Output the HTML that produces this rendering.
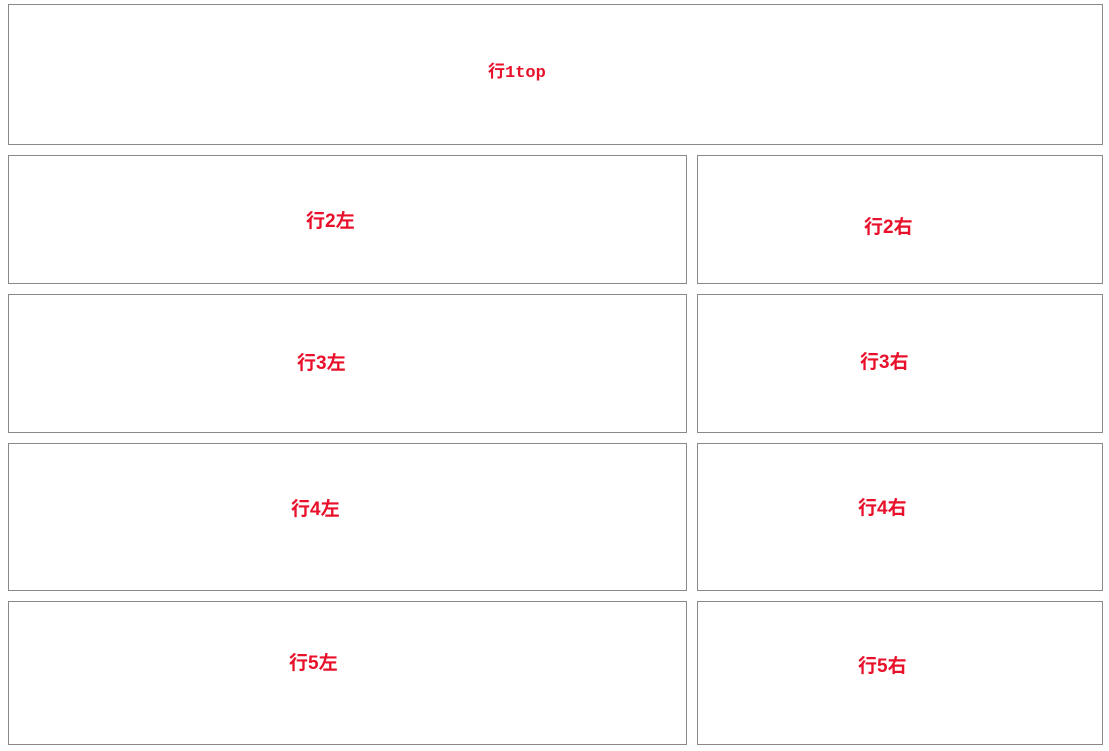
<!DOCTYPE html>
<html><head><meta charset="utf-8"><style>
body{margin:0;width:1109px;height:751px;background:#fff;position:relative;overflow:hidden}
.b{position:absolute;border:1px solid #888;box-sizing:border-box}
.t{position:absolute;color:#e8102a;font-weight:bold;font-size:19px;line-height:20px;font-family:"Liberation Sans","Noto Sans CJK SC",sans-serif;white-space:nowrap}
.m{font-family:"Liberation Mono","Noto Sans CJK SC",monospace;font-size:17px}
</style></head><body>
<div class="b" style="left:8px;top:4px;width:1095px;height:141px"></div>
<div class="b" style="left:8px;top:155px;width:679px;height:129px"></div>
<div class="b" style="left:697px;top:155px;width:406px;height:129px"></div>
<div class="b" style="left:8px;top:294px;width:679px;height:139px"></div>
<div class="b" style="left:697px;top:294px;width:406px;height:139px"></div>
<div class="b" style="left:8px;top:443px;width:679px;height:148px"></div>
<div class="b" style="left:697px;top:443px;width:406px;height:148px"></div>
<div class="b" style="left:8px;top:601px;width:679px;height:144px"></div>
<div class="b" style="left:697px;top:601px;width:406px;height:144px"></div>
<div class="t m" style="left:488px;top:64px">行1top</div>
<div class="t" style="left:306px;top:212px">行2左</div>
<div class="t" style="left:864px;top:218px">行2右</div>
<div class="t" style="left:297px;top:354px">行3左</div>
<div class="t" style="left:860px;top:353px">行3右</div>
<div class="t" style="left:291px;top:500px">行4左</div>
<div class="t" style="left:858px;top:499px">行4右</div>
<div class="t" style="left:289px;top:654px">行5左</div>
<div class="t" style="left:858px;top:657px">行5右</div>
</body></html>
